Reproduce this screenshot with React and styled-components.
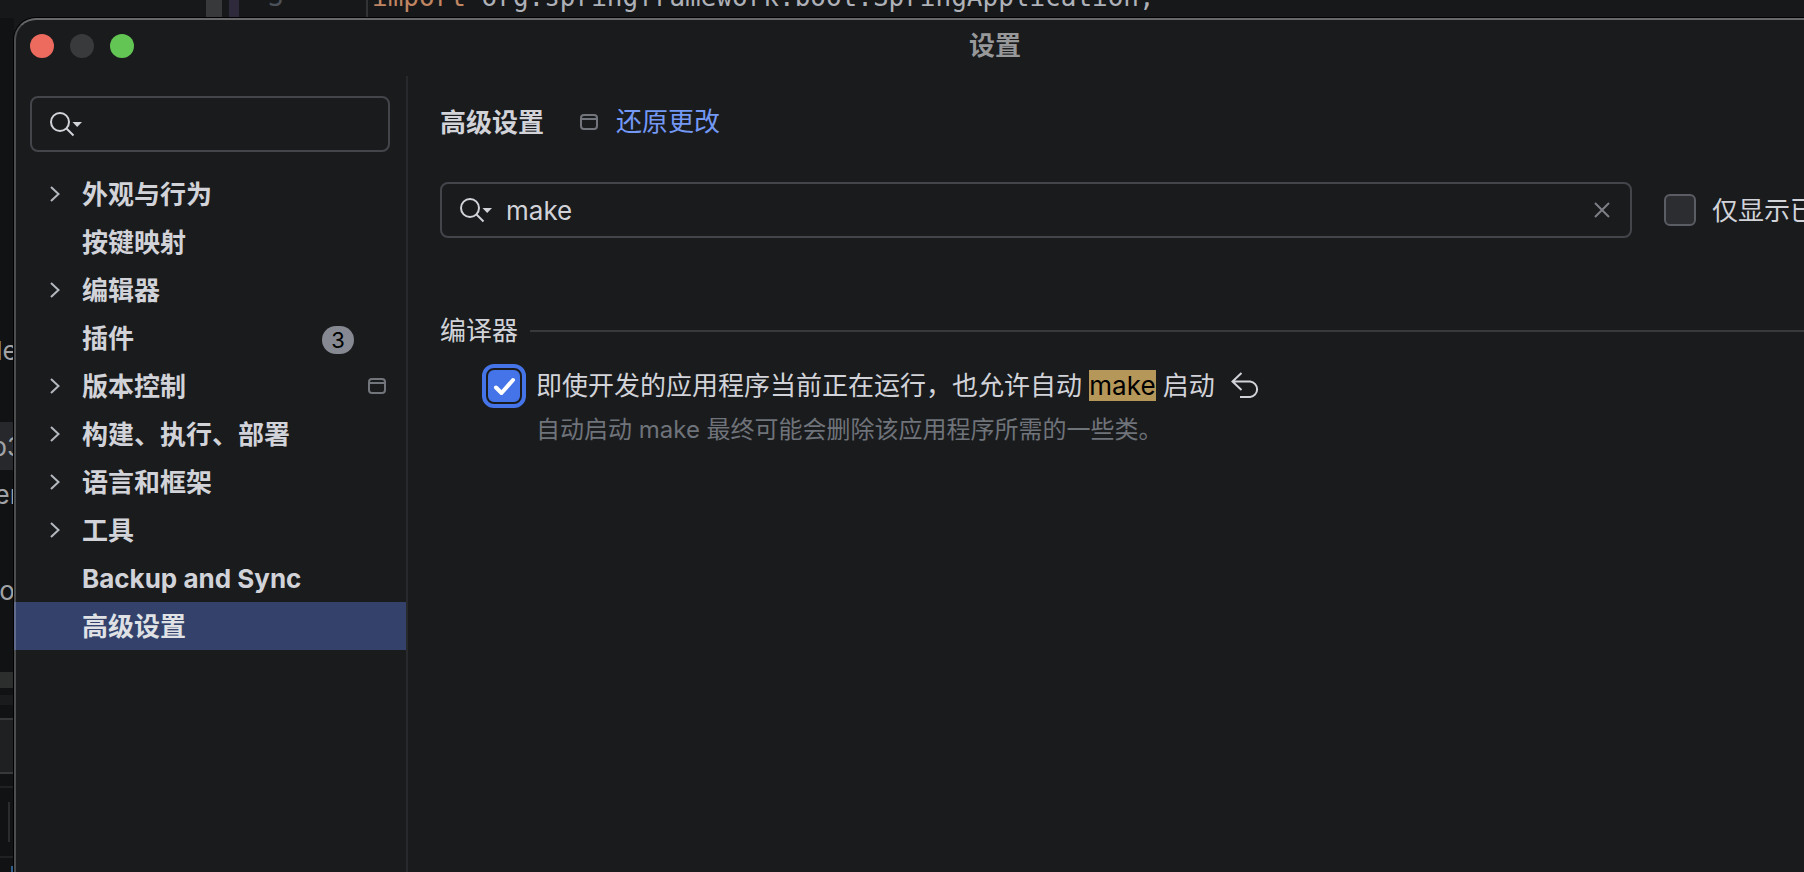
import React, { useState } from 'react'
import styled, { createGlobalStyle } from 'styled-components'

const menu = [
    { name: '外观与行为', expandable: true },
    { name: '按键映射' },
    { name: '编辑器', expandable: true },
    { name: '插件', badge: 3 },
    { name: '版本控制', expandable: true, project: true },
    { name: '构建、执行、部署', expandable: true },
    { name: '语言和框架', expandable: true },
    { name: '工具', expandable: true },
    { name: 'Backup and Sync' },
    { name: '高级设置' },
]

const SearchIcon = () => (
    <SearchSvg viewBox="0 0 32 26" aria-hidden="true">
        <circle cx="10" cy="11" r="9" fill="none" stroke="#d1d3d9" strokeWidth="2" />
        <path d="M16.5 17.5 23.5 24.5" stroke="#d1d3d9" strokeWidth="2" />
        <path d="M22.5 11H32L27.2 16Z" fill="#d1d3d9" />
    </SearchSvg>
)

const ProjectIcon = () => (
    <ProjectSvg viewBox="0 0 18 16" aria-hidden="true">
        <rect x="1" y="1" width="16" height="14" rx="3" fill="none" stroke="#73757d" strokeWidth="2" />
        <path d="M1 5H17" stroke="#73757d" strokeWidth="2" />
    </ProjectSvg>
)

function App() {
    const [selected, setSelected] = useState('高级设置')
    const [menuSearch, setMenuSearch] = useState('')
    const [search, setSearch] = useState('make')
    const [onlyModified, setOnlyModified] = useState(false)
    const [autoMake, setAutoMake] = useState(true)

    return (
        <Desktop>
            <GlobalStyle />
            <CodeStrip>
                <GutterBar />
                <ChangeBar />
                <LineNumber>3</LineNumber>
                <CodeLine><Keyword>import</Keyword> org.springframework.boot.SpringApplication;</CodeLine>
            </CodeStrip>
            <ProjectStrip>
                <TreeFile>le</TreeFile>
                <TreeFile />
                <TreeFile $active>p3</TreeFile>
                <TreeFile>er</TreeFile>
                <TreeFile />
                <TreeFile>o</TreeFile>
                <ScrollThumb />
                <ScrollTrack />
                <ToolPanel />
                <Rule />
                <Caret />
                <Rule />
                <BlueMark />
            </ProjectStrip>
            <Window>
                <TitleBar>
                    <Lights>
                        <Light $color="#ed6a5e" aria-label="关闭" />
                        <Light $color="#393a3c" aria-label="最小化" />
                        <Light $color="#62c554" aria-label="缩放" />
                    </Lights>
                    <WindowTitle>设置</WindowTitle>
                </TitleBar>
                <Body>
                    <Sidebar>
                        <MenuSearch>
                            <SearchIcon />
                            <SearchInput aria-label="搜索设置" value={ menuSearch } onChange={ (e) => setMenuSearch(e.target.value) } />
                        </MenuSearch>
                        <nav>
                            {menu.map((item) => (
                                <MenuItem key={ item.name } $selected={ selected === item.name } onClick={ () => setSelected(item.name) }>
                                    <Chevron viewBox="0 0 10 16" aria-hidden="true">
                                        {item.expandable && <path d="M1 1 8.5 8 1 15" fill="none" stroke="#b4b8bf" strokeWidth="2" />}
                                    </Chevron>
                                    <MenuLabel>{item.name}</MenuLabel>
                                    {item.badge && <Badge>{item.badge}</Badge>}
                                    {item.project && <ProjectIcon />}
                                </MenuItem>
                            ))}
                        </nav>
                    </Sidebar>
                    <Content>
                        <Header>
                            <Heading>高级设置</Heading>
                            <ProjectIcon />
                            <RevertLink href="#">还原更改</RevertLink>
                        </Header>
                        <Toolbar>
                            <SearchField>
                                <SearchIcon />
                                <SearchInput aria-label="搜索高级设置" value={ search } onChange={ (e) => setSearch(e.target.value) } />
                                <IconButton aria-label="清除" onClick={ () => setSearch('') }>
                                    <svg width="16" height="16" viewBox="0 0 16 16">
                                        <path d="M1 1 15 15M15 1 1 15" stroke="#7d7f86" strokeWidth="2" />
                                    </svg>
                                </IconButton>
                            </SearchField>
                            <FilterLabel>
                                <Checkbox type="checkbox" checked={ onlyModified } onChange={ (e) => setOnlyModified(e.target.checked) } />
                                <LabelText>仅显示已</LabelText>
                            </FilterLabel>
                        </Toolbar>
                        <SectionTitle>编译器</SectionTitle>
                        <Option>
                            <OptionLabel>
                                <CheckboxWrap>
                                    <Checkbox type="checkbox" $focused checked={ autoMake } onChange={ (e) => setAutoMake(e.target.checked) } />
                                    {autoMake && (
                                        <CheckMark viewBox="0 0 32 32" aria-hidden="true">
                                            <path d="M8 17.5 13.5 23 25 10" fill="none" stroke="#fff" strokeWidth="4" strokeLinecap="round" strokeLinejoin="round" />
                                        </CheckMark>
                                    )}
                                </CheckboxWrap>
                                <span>即使开发的应用程序当前正在运行，也允许自动 <Mark>make</Mark> 启动</span>
                            </OptionLabel>
                            <IconButton aria-label="还原" onClick={ () => setAutoMake(false) }>
                                <svg width="28" height="28" viewBox="0 0 28 28">
                                    <path d="M10.5 1 1.5 9.5 10.5 18M1.5 9.5H19.2A7.8 7.8 0 0 1 19.2 25H9" fill="none" stroke="#d1d3d9" strokeWidth="2" />
                                </svg>
                            </IconButton>
                        </Option>
                        <Hint>自动启动 make 最终可能会删除该应用程序所需的一些类。</Hint>
                    </Content>
                </Body>
            </Window>
        </Desktop>
    )
}

export default App

const GlobalStyle = createGlobalStyle`
    * {
        box-sizing: border-box;
    }
    body {
        margin: 0;
        background-color: #17181a;
        color: #d1d3d9;
        font-family: Inter, "Noto Sans CJK SC", sans-serif;
        font-size: 26px;
        line-height: 32px;
    }
    button, input {
        font: inherit;
        color: inherit;
        margin: 0;
    }
`

const Desktop = styled.div`
    display: grid;
    grid-template-columns: 14px 1fr;
    grid-template-rows: 18px 1fr;
    height: 100vh;
    overflow: hidden;
`

const CodeStrip = styled.div`
    grid-column: 1 / -1;
    display: flex;
    align-items: flex-end;
    padding-left: 206px;
    overflow: hidden;
    font-family: "DejaVu Sans Mono", monospace;
    line-height: 30px;
    white-space: nowrap;
`

const GutterBar = styled.div`
    width: 16px;
    height: 18px;
    background-color: #38393b;
`

const ChangeBar = styled.div`
    width: 10px;
    height: 18px;
    margin-left: 7px;
    background-color: #2e2a3c;
`

const LineNumber = styled.span`
    width: 127px;
    padding: 0 0 6px 29px;
    color: #4b5059;
`

const CodeLine = styled.code`
    padding: 0 0 6px 4px;
    border-left: 2px solid #313335;
    font-family: inherit;
    color: #aeb1b8;
`

const Keyword = styled.span`
    color: #c08562;
`

const ProjectStrip = styled.div`
    display: flex;
    flex-direction: column;
    padding-top: 308px;
    overflow: hidden;
    background-color: #111214;
    color: #a1a3a6;
`

const TreeFile = styled.div`
    display: flex;
    flex-shrink: 0;
    align-items: center;
    justify-content: center;
    height: 48px;
    padding-top: 2px;
    background-color: ${ (props) => props.$active ? '#27282b' : 'transparent' };
`

const ScrollThumb = styled.div`
    flex-shrink: 0;
    height: 16px;
    margin-top: 58px;
    background-color: #2c2e2d;
`

const ScrollTrack = styled.div`
    flex-shrink: 0;
    height: 10px;
    margin-top: 7px;
    background-color: #1a1b1d;
`

const ToolPanel = styled.div`
    flex-shrink: 0;
    height: 56px;
    margin: 13px 0 12px;
    border: solid #37383a;
    border-width: 2px 0;
    background-color: #1f2022;
`

const Rule = styled.div`
    flex-shrink: 0;
    height: 2px;
    background-color: #202123;
`

const Caret = styled.div`
    flex-shrink: 0;
    width: 2px;
    height: 40px;
    margin: 14px 0 14px 8px;
    background-color: #2b2c2e;
`

const BlueMark = styled.div`
    flex-shrink: 0;
    width: 3px;
    height: 8px;
    margin: 8px 0 0 11px;
    background-color: #2f5d8c;
`

/* the dialog runs past the right edge of the screen */
const Window = styled.div`
    position: relative;
    display: flex;
    flex-direction: column;
    margin-right: -172px;
    border-top-left-radius: 22px;
    background-color: #1a1b1d;
    box-shadow: 0 0 0 1px #000;
    &::after {
        content: '';
        position: absolute;
        inset: 0;
        border: 2px solid rgba(255, 255, 255, 0.22);
        border-top-color: rgba(255, 255, 255, 0.34);
        border-bottom: 0;
        border-top-left-radius: 22px;
        pointer-events: none;
    }
`

const TitleBar = styled.div`
    display: grid;
    grid-template-columns: 1fr auto 1fr;
    align-items: center;
    height: 58px;
    padding: 2px 16px 4px;
`

const Lights = styled.div`
    display: flex;
    gap: 16px;
`

const Light = styled.button`
    width: 24px;
    height: 24px;
    padding: 0;
    border: 0;
    border-radius: 50%;
    background-color: ${ (props) => props.$color };
`

const WindowTitle = styled.span`
    font-weight: 700;
    color: #97989a;
`

const Body = styled.div`
    display: flex;
    flex: 1;
`

const Sidebar = styled.div`
    width: 394px;
    padding-top: 20px;
    border-right: 2px solid #28292c;
`

const SearchField = styled.div`
    display: flex;
    flex: 1;
    align-items: center;
    height: 56px;
    padding: 0 20px 0 18px;
    border: 2px solid #43454a;
    border-radius: 8px;
`

const MenuSearch = styled(SearchField)`
    margin: 0 16px 18px;
`

const SearchSvg = styled.svg`
    flex-shrink: 0;
    width: 32px;
    height: 26px;
`

const SearchInput = styled.input`
    flex: 1;
    min-width: 0;
    padding: 2px 14px 0;
    border: 0;
    outline: none;
    background-color: transparent;
`

const MenuItem = styled.button`
    display: flex;
    align-items: center;
    width: 100%;
    height: 48px;
    padding: 0 20px 0 36px;
    border: 0;
    font-weight: 700;
    text-align: left;
    color: ${ (props) => props.$selected ? '#dfe1e5' : '#d1d3d9' };
    background-color: ${ (props) => props.$selected ? '#33416b' : 'transparent' };
`

const Chevron = styled.svg`
    width: 10px;
    height: 16px;
    margin-right: 22px;
`

const MenuLabel = styled.span`
    flex: 1;
    padding-top: 2px;
`

const Badge = styled.span`
    min-width: 32px;
    margin: 4px 32px 0 0;
    border-radius: 14px;
    font-size: 22px;
    font-weight: 400;
    line-height: 28px;
    text-align: center;
    color: #000;
    background-color: #868991;
`

const ProjectSvg = styled.svg`
    flex-shrink: 0;
    width: 18px;
    height: 16px;
`

const Content = styled.div`
    flex: 1;
    padding: 30px 0 0 32px;
`

const Header = styled.div`
    display: flex;
    align-items: center;
    height: 32px;
`

const Heading = styled.h1`
    margin: 0 36px 0 0;
    padding-top: 2px;
    font-size: 26px;
    font-weight: 700;
`

const RevertLink = styled.a`
    margin-left: 18px;
    color: #7399f5;
    text-decoration: none;
`

const Toolbar = styled.div`
    display: flex;
    align-items: center;
    gap: 32px;
    margin-top: 44px;
    padding-right: 160px;
`

const IconButton = styled.button`
    display: flex;
    padding: 0;
    border: 0;
    background-color: transparent;
`

const FilterLabel = styled.label`
    display: flex;
    align-items: center;
    gap: 16px;
    white-space: nowrap;
`

const LabelText = styled.span`
    padding-top: 2px;
`

const Checkbox = styled.input`
    appearance: none;
    grid-area: 1 / 1;
    width: 32px;
    height: 32px;
    border: 2px solid #5a5d63;
    border-radius: 6px;
    background-color: #2b2d30;
    &:checked {
        border-color: #4573e8;
        background-color: #4573e8;
    }
    ${ (props) => props.$focused && `
        outline: 4px solid #4573e8;
        outline-offset: 2px;
    ` }
`

const CheckboxWrap = styled.span`
    display: grid;
`

const CheckMark = styled.svg`
    grid-area: 1 / 1;
    width: 32px;
    height: 32px;
    pointer-events: none;
`

const SectionTitle = styled.h2`
    display: flex;
    align-items: center;
    margin: 77px 0 0;
    font-size: 26px;
    font-weight: 400;
    &::after {
        content: '';
        flex: 1;
        height: 2px;
        margin-left: 12px;
        background-color: #38393b;
    }
`

const Option = styled.div`
    display: flex;
    align-items: center;
    gap: 16px;
    margin-top: 23px;
    padding-left: 48px;
`

const OptionLabel = styled.label`
    display: flex;
    align-items: center;
    gap: 16px;
`

const Mark = styled.mark`
    color: #000;
    background-color: #b5975a;
`

const Hint = styled.p`
    margin: 12px 0 0 96px;
    font-size: 24px;
    color: #6f737a;
`
